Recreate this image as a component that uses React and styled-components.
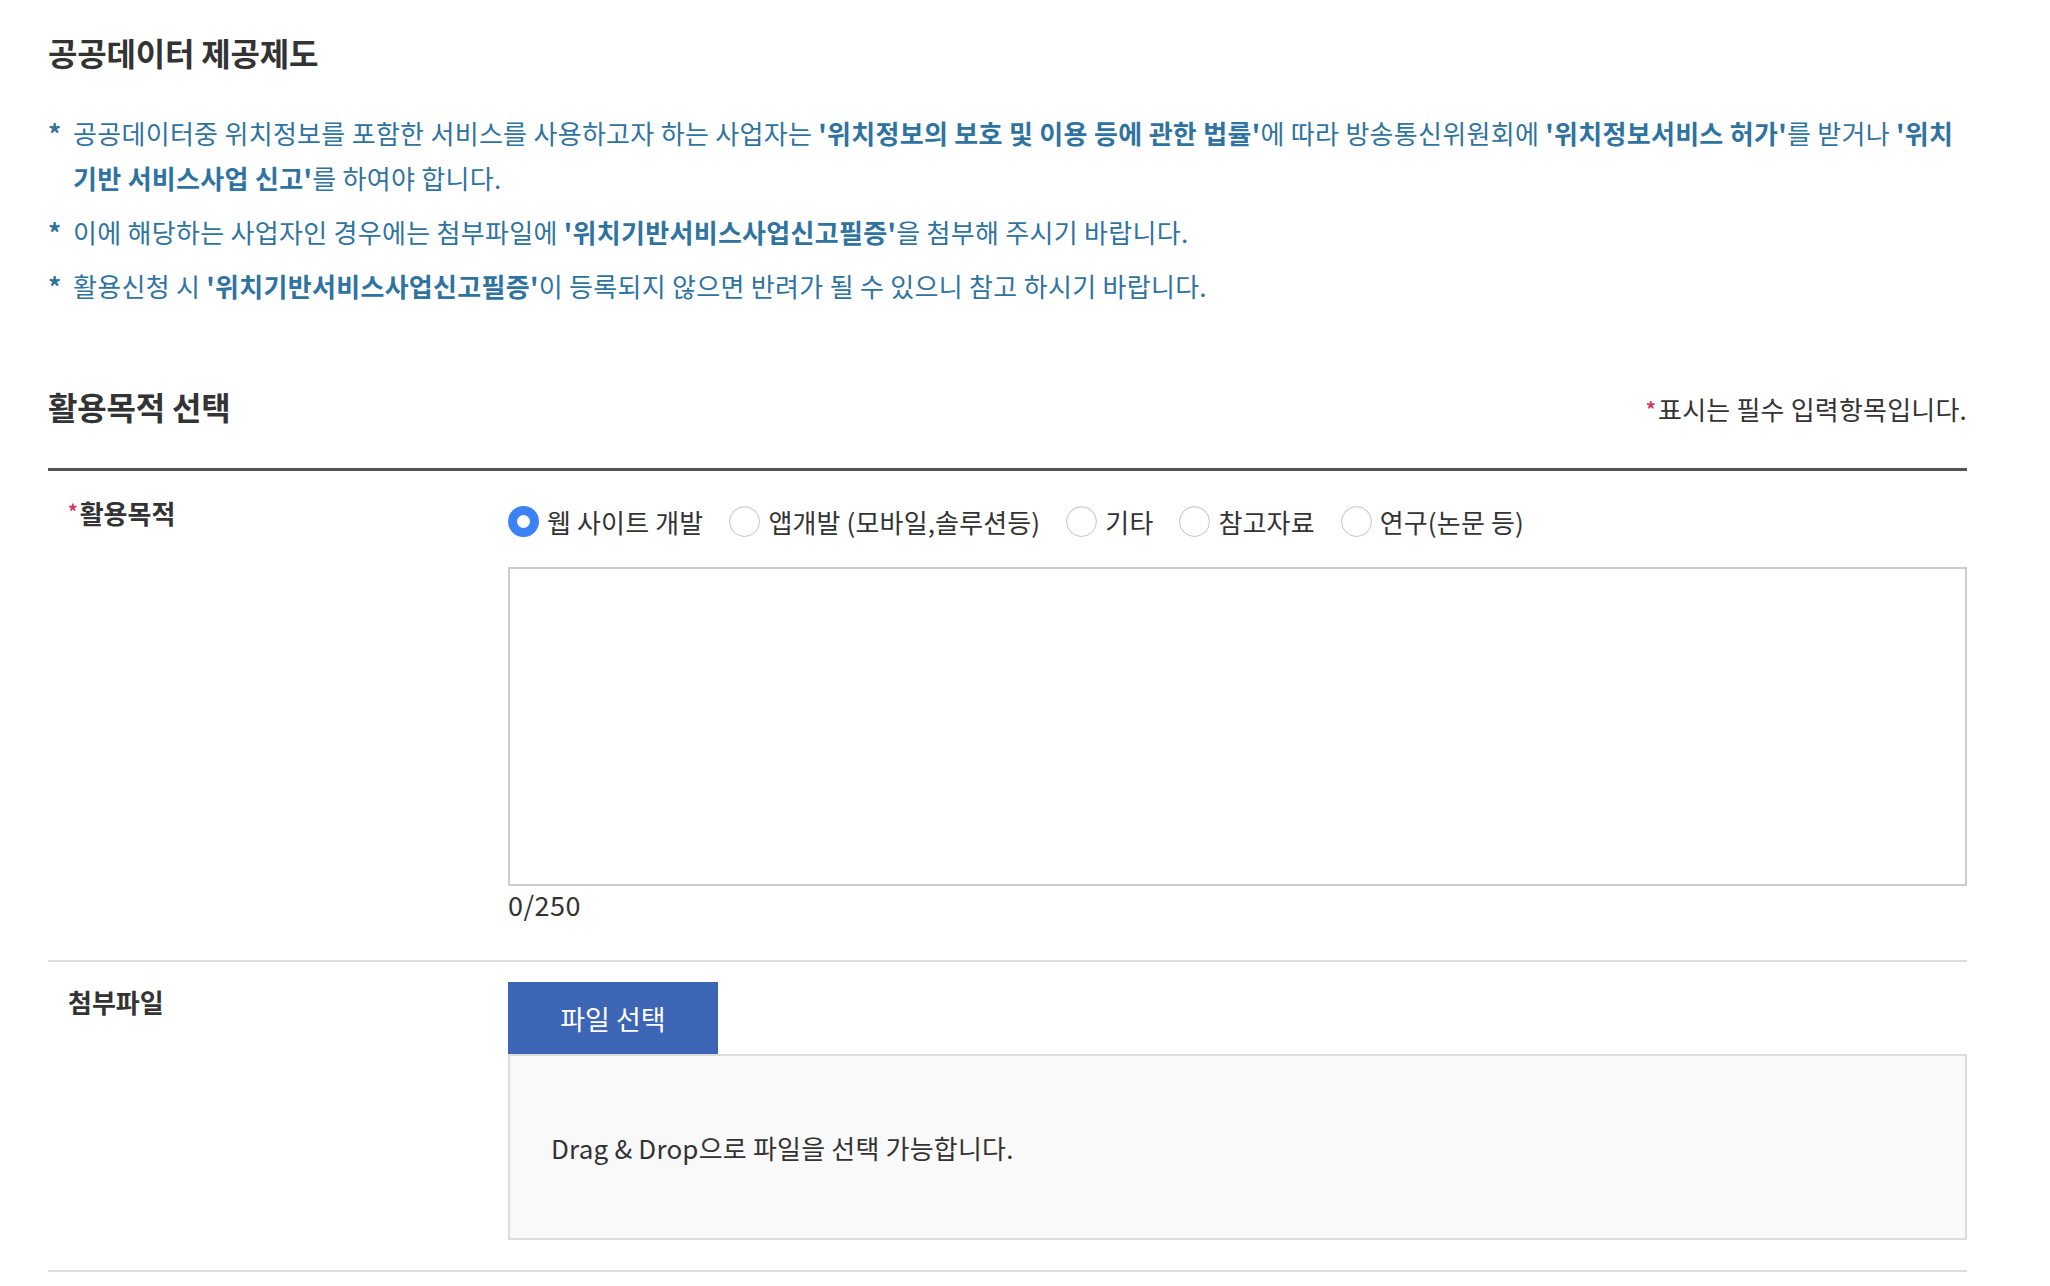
import React from 'react';
import styled, { createGlobalStyle } from 'styled-components';

const GlobalStyle = createGlobalStyle`
  body {
    margin: 0;
    background: #fff;
    font-family: "Noto Sans CJK KR", "Noto Sans", sans-serif;
    color: #333;
  }
`;

const notices = [
  [
    '공공데이터중 위치정보를 포함한 서비스를 사용하고자 하는 사업자는 ',
    { b: "'위치정보의 보호 및 이용 등에 관한 법률'" },
    '에 따라 방송통신위원회에 ',
    { b: "'위치정보서비스 허가'" },
    '를 받거나 ',
    { b: "'위치기반 서비스사업 신고'" },
    '를 하여야 합니다.',
  ],
  [
    '이에 해당하는 사업자인 경우에는 첨부파일에 ',
    { b: "'위치기반서비스사업신고필증'" },
    '을 첨부해 주시기 바랍니다.',
  ],
  [
    '활용신청 시 ',
    { b: "'위치기반서비스사업신고필증'" },
    '이 등록되지 않으면 반려가 될 수 있으니 참고 하시기 바랍니다.',
  ],
];

const purposes = ['웹 사이트 개발', '앱개발 (모바일,솔루션등)', '기타', '참고자료', '연구(논문 등)'];

function App() {
  const [purpose, setPurpose] = React.useState(purposes[0]);
  const [text, setText] = React.useState('');

  return (
    <Page>
      <GlobalStyle />
      <Title>공공데이터 제공제도</Title>
      <NoticeList>
        {notices.map((parts, i) => (
          <NoticeItem key={i}>
            <Mark>*</Mark>
            <p>
              {parts.map((p, j) => (typeof p === 'string' ? p : <strong key={j}>{p.b}</strong>))}
            </p>
          </NoticeItem>
        ))}
      </NoticeList>

      <SectionHeader>
        <SectionTitle>활용목적 선택</SectionTitle>
        <RequiredNote><Req>*</Req>표시는 필수 입력항목입니다.</RequiredNote>
      </SectionHeader>

      <FormTable>
        <FormRow $bottom={37}>
          <FieldLabel><Req $small>*</Req>활용목적</FieldLabel>
          <div>
            <RadioGroup>
              {purposes.map((p) => (
                <Option key={p}>
                  <Radio
                    type="radio"
                    name="purpose"
                    checked={purpose === p}
                    onChange={() => setPurpose(p)}
                  />
                  {p}
                </Option>
              ))}
            </RadioGroup>
            <TextArea value={text} maxLength={250} onChange={(e) => setText(e.target.value)} />
            <Counter>{text.length}/250</Counter>
          </div>
        </FormRow>

        <FormRow $bottom={30}>
          <FieldLabel>첨부파일</FieldLabel>
          <div>
            <FileButton type="button">파일 선택</FileButton>
            <DropZone>Drag &amp; Drop으로 파일을 선택 가능합니다.</DropZone>
          </div>
        </FormRow>
      </FormTable>
    </Page>
  );
}

const Page = styled.div`
  width: 1919px;
  padding: 32px 0 40px 48px;
`;

const Title = styled.h2`
  margin: 0;
  font-size: 32px;
  line-height: 40px;
  font-weight: 700;
  letter-spacing: -0.2px;
  color: #333;
`;

const NoticeList = styled.ul`
  list-style: none;
  margin: 38px 0 0;
  padding: 0;
`;

const NoticeItem = styled.li`
  display: flex;
  margin-bottom: 9px;
  font-size: 26px;
  line-height: 45px;
  color: #2f73a0;

  p {
    margin: 0;
    flex: 1;
    letter-spacing: 0.3px;
  }

  strong {
    font-weight: 700;
  }
`;

const Mark = styled.span`
  width: 25px;
  flex-shrink: 0;
  font-weight: 700;
`;

const SectionHeader = styled.div`
  display: flex;
  justify-content: space-between;
  align-items: center;
  margin-top: 75px;
  margin-bottom: 39px;
`;

const SectionTitle = styled.h3`
  margin: 0;
  font-size: 32px;
  line-height: 40px;
  font-weight: 700;
  letter-spacing: -0.2px;
  color: #333;
`;

const RequiredNote = styled.p`
  margin: 6px 0 0;
  font-size: 26px;
  line-height: 40px;
  letter-spacing: 0.2px;
  color: #333;
`;

const Req = styled.span`
  color: #d2335f;
  font-size: ${(p) => (p.$small ? '19px' : '20px')};
  vertical-align: ${(p) => (p.$small ? '5px' : '3px')};
  font-weight: 700;
  margin-right: 2px;
`;

const FormTable = styled.div`
  border-top: 3px solid #555;
`;

const FormRow = styled.div`
  display: grid;
  grid-template-columns: 460px 1fr;
  padding: 20px 0 ${(p) => p.$bottom}px;
  border-bottom: 2px solid #ddd;
`;

const FieldLabel = styled.div`
  padding: 8px 0 0 20px;
  font-size: 26px;
  line-height: 24px;
  font-weight: 700;
  color: #333;
`;

const RadioGroup = styled.div`
  display: flex;
  align-items: center;
  padding-top: 7px;
  height: 46px;
`;

const Option = styled.label`
  display: inline-flex;
  align-items: center;
  gap: 8px;
  margin-right: 26px;
  font-size: 26px;
  letter-spacing: 0.15px;
  color: #333;
  cursor: pointer;
`;

const Radio = styled.input`
  appearance: none;
  margin: 0;
  width: 31px;
  height: 31px;
  border-radius: 50%;
  border: 1px solid #c6c6c6;
  background: #fff;
  box-shadow: inset 0 1px 2px rgba(0, 0, 0, 0.08);
  cursor: pointer;

  &:checked {
    border: 9px solid #3a82f6;
    box-shadow: none;
  }
`;

const TextArea = styled.textarea`
  display: block;
  box-sizing: border-box;
  width: 100%;
  height: 319px;
  margin-top: 23px;
  border: 2px solid #ccc;
  resize: none;
  padding: 12px;
  font: inherit;
  font-size: 26px;
  outline: none;
`;

const Counter = styled.div`
  margin-top: 1px;
  font-size: 27px;
  line-height: 36px;
  letter-spacing: 0.5px;
  color: #333;
`;

const FileButton = styled.button`
  display: block;
  width: 210px;
  height: 72px;
  border: 0;
  background: #3d65b5;
  color: #fff;
  font-family: inherit;
  font-size: 27px;
  cursor: pointer;
`;

const DropZone = styled.div`
  box-sizing: border-box;
  height: 186px;
  display: flex;
  align-items: center;
  padding-left: 41px;
  border: 2px solid #ddd;
  background: #f9f9f9;
  font-size: 26px;
  letter-spacing: 0.2px;
  color: #333;
`;

export default App;
